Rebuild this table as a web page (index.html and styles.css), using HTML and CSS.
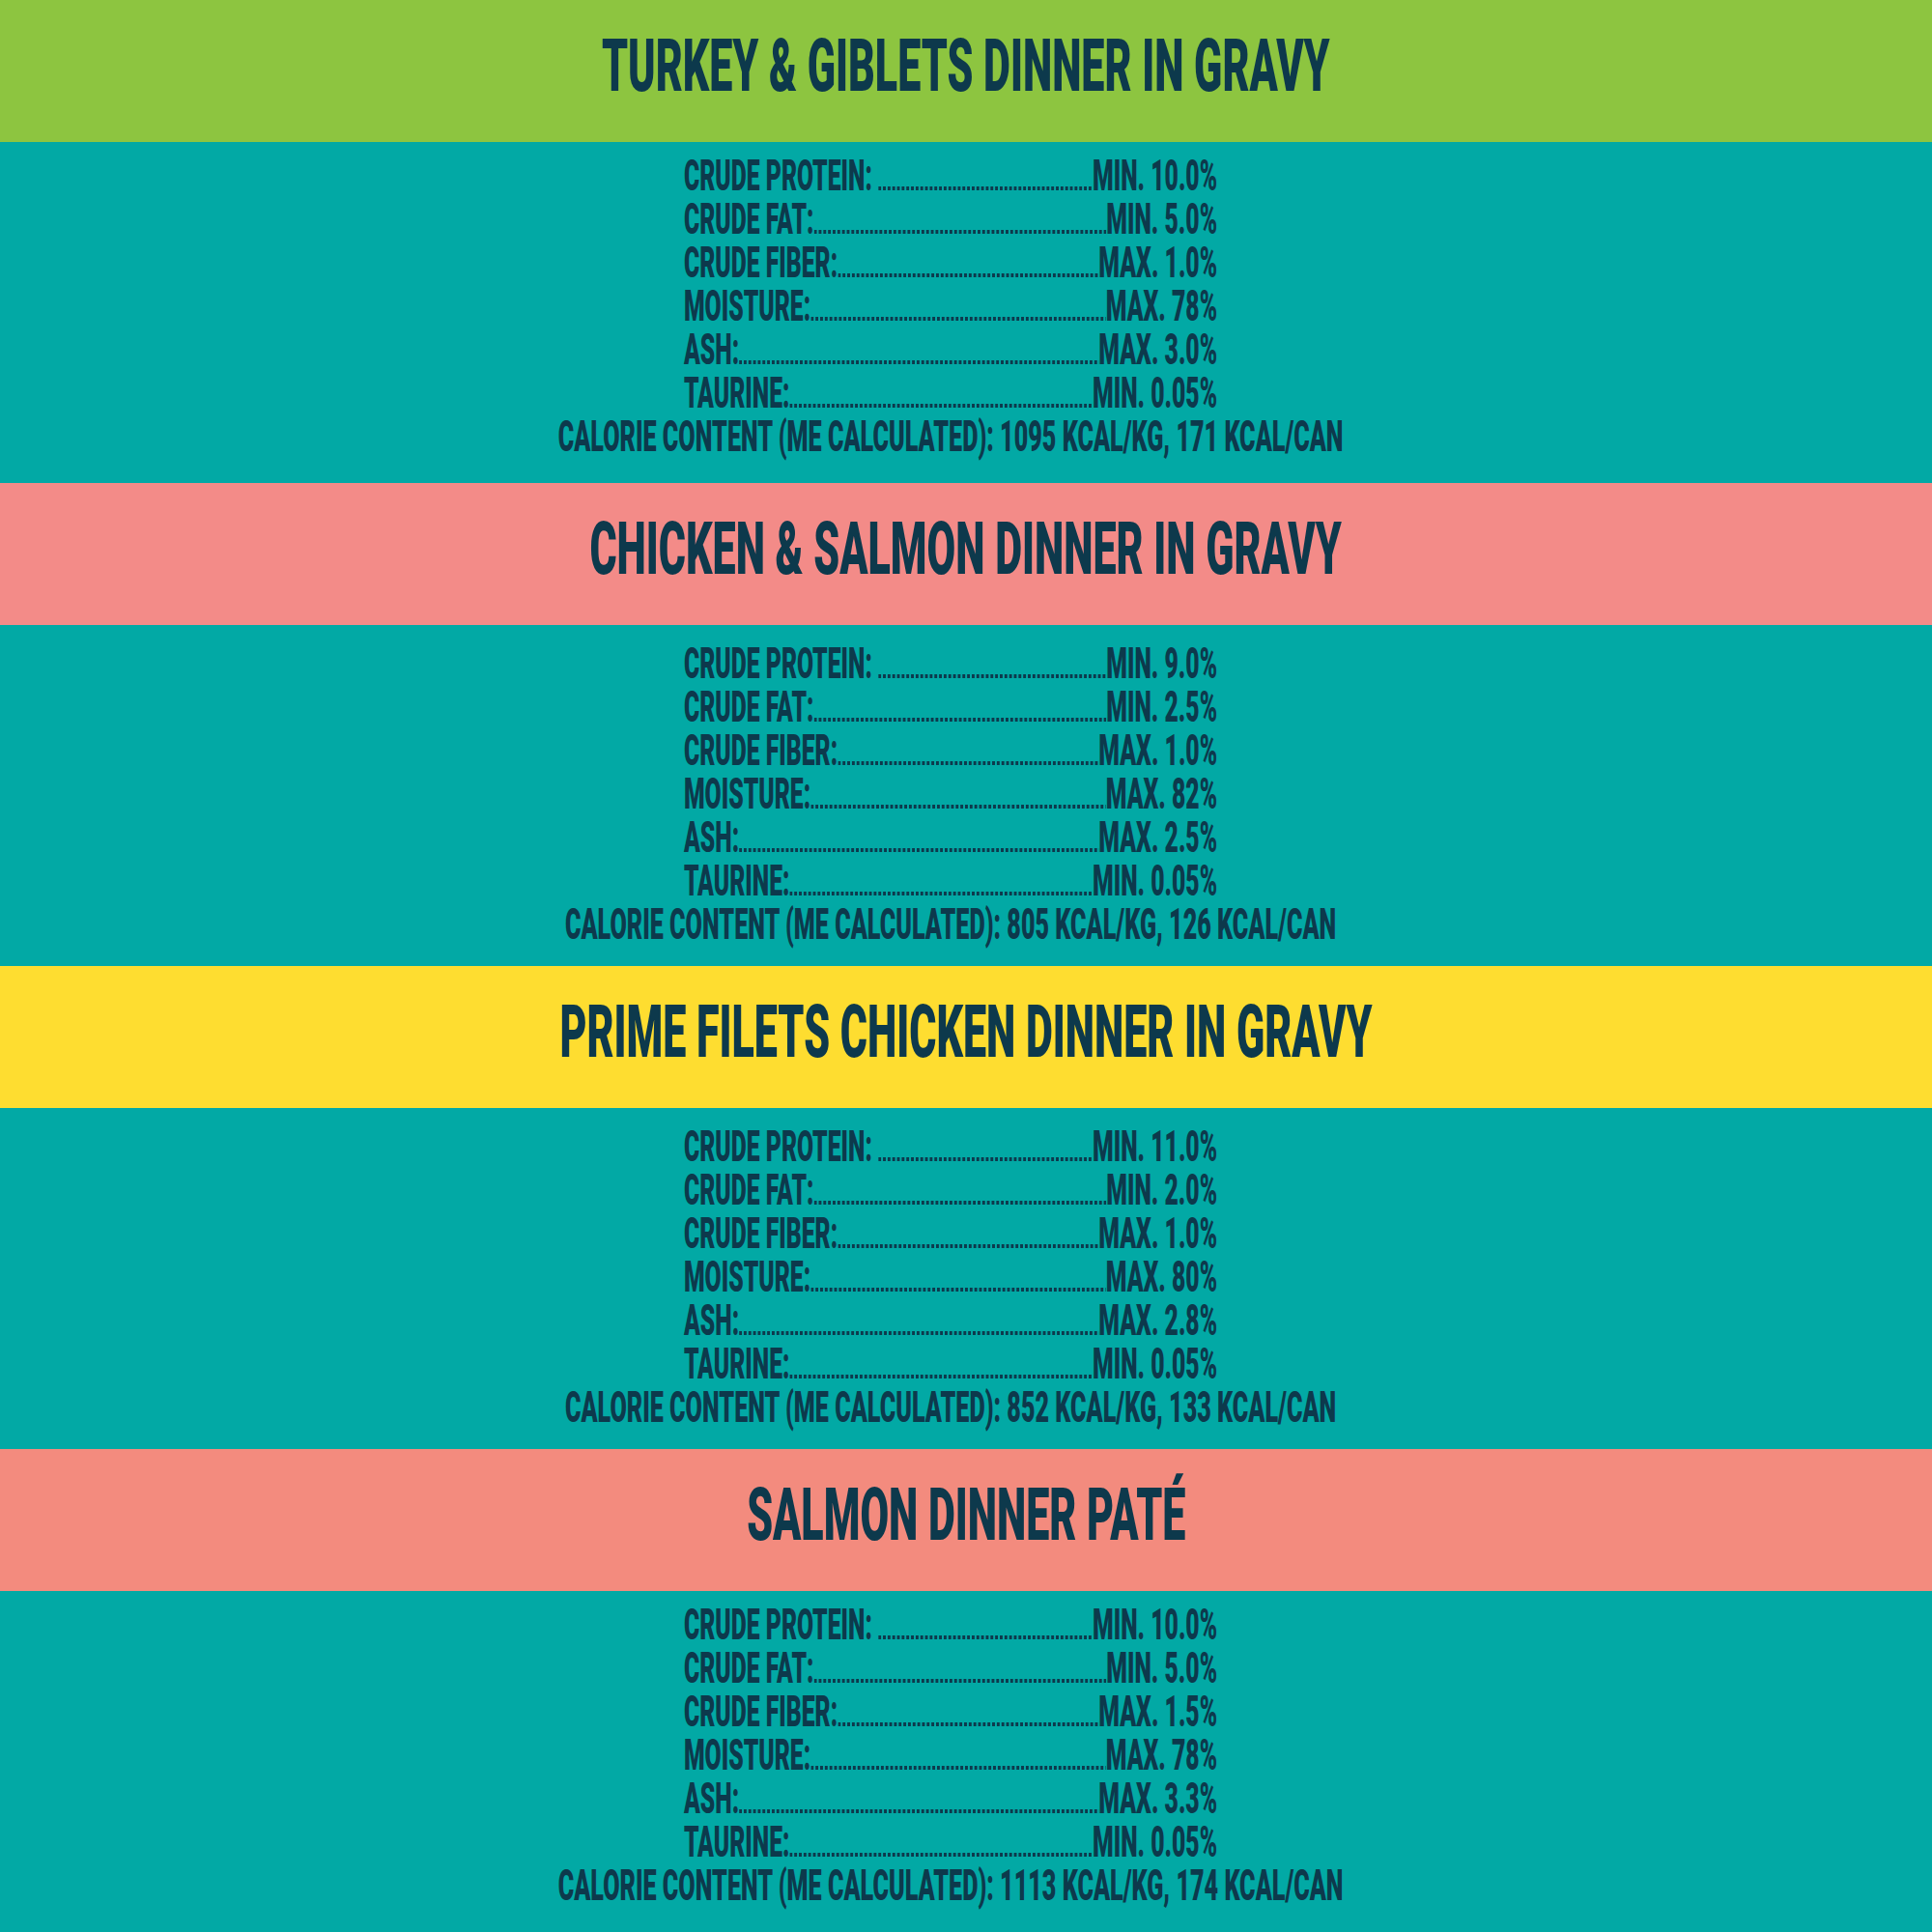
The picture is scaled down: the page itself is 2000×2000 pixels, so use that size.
FILE: index.html
```html
<!DOCTYPE html>
<html lang="en">
<head>
<meta charset="utf-8">
<title>Guaranteed Analysis</title>
<link rel="stylesheet" href="styles.css">
</head>
<body>
<main class="sheet">
  <section class="product">
    <header class="band band--green"><h2 class="title">TURKEY &amp; GIBLETS DINNER IN GRAVY</h2></header>
    <div class="panel">
      <ul class="facts">
        <li class="fact"><span class="label">CRUDE PROTEIN:&nbsp;</span><span class="leader"></span><span class="value">MIN. 10.0%</span></li>
        <li class="fact"><span class="label">CRUDE FAT:</span><span class="leader"></span><span class="value">MIN. 5.0%</span></li>
        <li class="fact"><span class="label">CRUDE FIBER:</span><span class="leader"></span><span class="value">MAX. 1.0%</span></li>
        <li class="fact"><span class="label">MOISTURE:</span><span class="leader"></span><span class="value">MAX. 78%</span></li>
        <li class="fact"><span class="label">ASH:</span><span class="leader"></span><span class="value">MAX. 3.0%</span></li>
        <li class="fact"><span class="label">TAURINE:</span><span class="leader"></span><span class="value">MIN. 0.05%</span></li>
      </ul>
      <p class="calorie">CALORIE CONTENT (ME CALCULATED): 1095 KCAL/KG, 171 KCAL/CAN</p>
    </div>
  </section>

  <section class="product">
    <header class="band band--pink"><h2 class="title">CHICKEN &amp; SALMON DINNER IN GRAVY</h2></header>
    <div class="panel panel--low">
      <ul class="facts">
        <li class="fact"><span class="label">CRUDE PROTEIN:&nbsp;</span><span class="leader"></span><span class="value">MIN. 9.0%</span></li>
        <li class="fact"><span class="label">CRUDE FAT:</span><span class="leader"></span><span class="value">MIN. 2.5%</span></li>
        <li class="fact"><span class="label">CRUDE FIBER:</span><span class="leader"></span><span class="value">MAX. 1.0%</span></li>
        <li class="fact"><span class="label">MOISTURE:</span><span class="leader"></span><span class="value">MAX. 82%</span></li>
        <li class="fact"><span class="label">ASH:</span><span class="leader"></span><span class="value">MAX. 2.5%</span></li>
        <li class="fact"><span class="label">TAURINE:</span><span class="leader"></span><span class="value">MIN. 0.05%</span></li>
      </ul>
      <p class="calorie">CALORIE CONTENT (ME CALCULATED): 805 KCAL/KG, 126 KCAL/CAN</p>
    </div>
  </section>

  <section class="product">
    <header class="band band--yellow"><h2 class="title">PRIME FILETS CHICKEN DINNER IN GRAVY</h2></header>
    <div class="panel panel--low">
      <ul class="facts">
        <li class="fact"><span class="label">CRUDE PROTEIN:&nbsp;</span><span class="leader"></span><span class="value">MIN. 11.0%</span></li>
        <li class="fact"><span class="label">CRUDE FAT:</span><span class="leader"></span><span class="value">MIN. 2.0%</span></li>
        <li class="fact"><span class="label">CRUDE FIBER:</span><span class="leader"></span><span class="value">MAX. 1.0%</span></li>
        <li class="fact"><span class="label">MOISTURE:</span><span class="leader"></span><span class="value">MAX. 80%</span></li>
        <li class="fact"><span class="label">ASH:</span><span class="leader"></span><span class="value">MAX. 2.8%</span></li>
        <li class="fact"><span class="label">TAURINE:</span><span class="leader"></span><span class="value">MIN. 0.05%</span></li>
      </ul>
      <p class="calorie">CALORIE CONTENT (ME CALCULATED): 852 KCAL/KG, 133 KCAL/CAN</p>
    </div>
  </section>

  <section class="product">
    <header class="band band--salmon"><h2 class="title">SALMON DINNER PATÉ</h2></header>
    <div class="panel">
      <ul class="facts">
        <li class="fact"><span class="label">CRUDE PROTEIN:&nbsp;</span><span class="leader"></span><span class="value">MIN. 10.0%</span></li>
        <li class="fact"><span class="label">CRUDE FAT:</span><span class="leader"></span><span class="value">MIN. 5.0%</span></li>
        <li class="fact"><span class="label">CRUDE FIBER:</span><span class="leader"></span><span class="value">MAX. 1.5%</span></li>
        <li class="fact"><span class="label">MOISTURE:</span><span class="leader"></span><span class="value">MAX. 78%</span></li>
        <li class="fact"><span class="label">ASH:</span><span class="leader"></span><span class="value">MAX. 3.3%</span></li>
        <li class="fact"><span class="label">TAURINE:</span><span class="leader"></span><span class="value">MIN. 0.05%</span></li>
      </ul>
      <p class="calorie">CALORIE CONTENT (ME CALCULATED): 1113 KCAL/KG, 174 KCAL/CAN</p>
    </div>
  </section>
</main>
</body>
</html>
```

FILE: styles.css
```css
* { box-sizing: border-box; }

html, body {
  margin: 0;
  padding: 0;
}

body {
  width: 2000px;
  height: 2000px;
  overflow: hidden;
  background: #02a9a5;
  font-family: Roboto, "Liberation Sans", sans-serif;
  font-weight: 900;
  color: #0d394c;
}

.sheet {
  display: flex;
  flex-direction: column;
}

.product {
  height: 500px;
  display: flex;
  flex-direction: column;
}

.band {
  height: 147px;
  display: flex;
  align-items: center;
  justify-content: center;
  padding-bottom: 12px;
}

.band--green { background: #8dc540; }
.band--pink { background: #f38b88; }
.band--yellow { background: #fedd30; }
.band--salmon { background: #f38b7e; }

.title {
  margin: 0;
  font-size: 76px;
  line-height: 76px;
  font-weight: 900;
  white-space: nowrap;
  transform: scaleX(0.566);
  transform-origin: center;
}

.panel {
  flex: 1;
  background: #02a9a5;
  display: flex;
  flex-direction: column;
  align-items: center;
  padding: 12px 32px 0 0;
}

.panel--low { padding-top: 17px; }

.facts {
  list-style: none;
  margin: 0;
  padding: 0;
  width: 1004px;
  transform: scaleX(0.55);
  transform-origin: center;
}

.fact {
  display: flex;
  font-size: 45px;
  line-height: 45px;
  white-space: nowrap;
}

.leader {
  flex: 1;
  background-image: linear-gradient(to right, #0d394c 0, #0d394c 62%, transparent 62%);
  background-size: 8.8px 4px;
  background-repeat: repeat-x;
  background-position: 0 34px;
}

.calorie {
  margin: 0;
  font-size: 45px;
  line-height: 45px;
  white-space: nowrap;
  transform: scaleX(0.559);
  transform-origin: center;
}
```
